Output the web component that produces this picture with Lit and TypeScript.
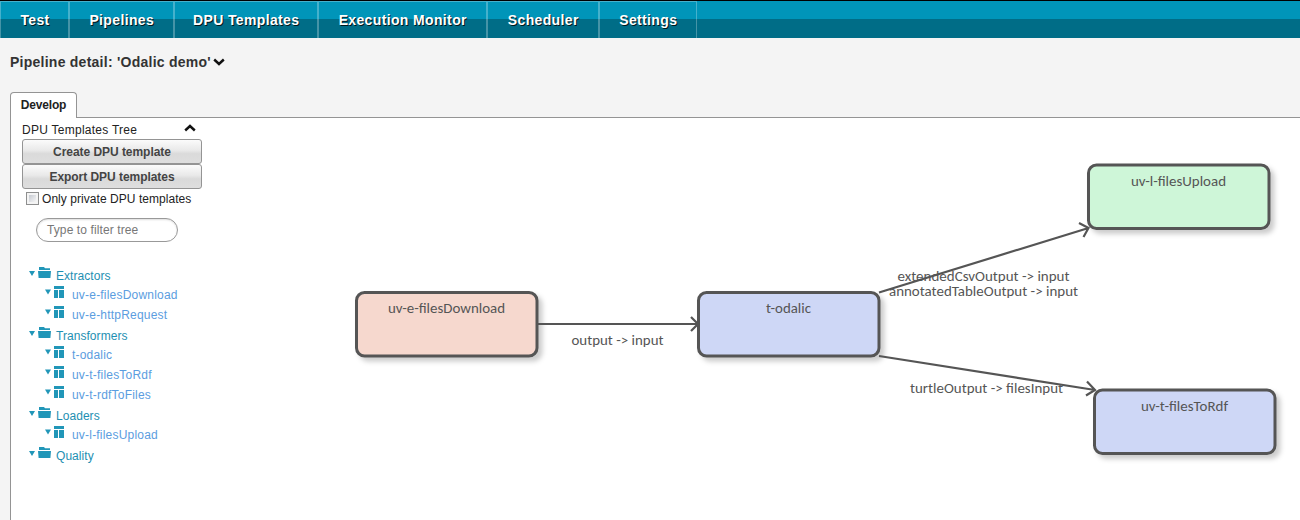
import { LitElement, html, svg, css } from "lit";
import { customElement } from "lit/decorators.js";

const menu = [
  { label: "Test", width: 69 },
  { label: "Pipelines", width: 105 },
  { label: "DPU Templates", width: 144 },
  { label: "Execution Monitor", width: 169 },
  { label: "Scheduler", width: 112 },
  { label: "Settings", width: 98 },
];

const tree = [
  { label: "Extractors", children: ["uv-e-filesDownload", "uv-e-httpRequest"] },
  { label: "Transformers", children: ["t-odalic", "uv-t-filesToRdf", "uv-t-rdfToFiles"] },
  { label: "Loaders", children: ["uv-l-filesUpload"] },
  { label: "Quality", children: [] as string[] },
];

// Diagram coordinates are relative to the canvas origin (211, 118).
const nodes = [
  { label: "uv-e-filesDownload", x: 145.5, y: 174.5, fill: "#f6d8ce", tx: 177, tw: 117 },
  { label: "t-odalic", x: 487.5, y: 174.5, fill: "#ced7f6", tx: 555, tw: 45 },
  { label: "uv-l-filesUpload", x: 877.5, y: 47, fill: "#cef6d8", tx: 920, tw: 95 },
  { label: "uv-t-filesToRdf", x: 883.5, y: 272, fill: "#ced7f6", tx: 930, tw: 87 },
];

const labels = [
  { text: "output -> input", x: 360.5, y: 227, w: 92 },
  { text: "extendedCsvOutput -> input", x: 686.5, y: 163, w: 172 },
  { text: "annotatedTableOutput -> input", x: 678, y: 178, w: 189 },
  { text: "turtleOutput -> filesInput", x: 699, y: 275, w: 153 },
];

@customElement("pipeline-canvas")
class PipelineCanvas extends LitElement {
  static styles = css`
    :host { display: block; flex: 1; min-width: 0; }
    svg { display: block; }
    text { font: 14px Carlito, Lato, "Open Sans", sans-serif; fill: #555; }
    .line { stroke: #555; stroke-width: 2.2; fill: none; }
    .box { stroke: #555; stroke-width: 3; }
  `;
  render() {
    return html`<svg width="1089" height="402" viewBox="0 0 1089 402">
      <defs>
        <filter id="shadow" x="-10%" y="-20%" width="125%" height="150%">
          <feDropShadow dx="4" dy="4" stdDeviation="2.5" flood-color="#000" flood-opacity="0.2" />
        </filter>
      </defs>
      ${nodes.map((n) => svg`
        <rect class="box" x=${n.x} y=${n.y} width="180.5" height="63.5" rx="8" fill=${n.fill} filter="url(#shadow)" />
        <text x=${n.tx} y=${n.y + 20.5} textLength=${n.tw} lengthAdjust="spacingAndGlyphs">${n.label}</text>`)}
      <path class="line" d="M327 206H487M480 199l7 7-7 7" />
      <path class="line" d="M668 174.5L877.5 110M868 105l9.5 5-5 9" />
      <path class="line" d="M668 238L884 272M876 263.500l8 8.500-9 5.500" />
      ${labels.map((l) => svg`<text x=${l.x} y=${l.y} textLength=${l.w} lengthAdjust="spacingAndGlyphs">${l.text}</text>`)}
    </svg>`;
  }
}

@customElement("app-root")
class AppRoot extends LitElement {
  static styles = css`
    :host {
      display: flex; flex-direction: column; box-sizing: border-box;
      width: 1300px; height: 520px; overflow: hidden; background: #f4f4f4;
      font: 12px "Liberation Sans", Arial, sans-serif; color: #222;
    }
    * { box-sizing: border-box; }
    nav {
      display: flex; height: 38px; border-top: 1px solid #000; flex: none;
      background: linear-gradient(#0095b9 0, #0095b9 18px, #006d87 18px);
    }
    .item {
      border: 1px solid rgba(255, 255, 255, 0.27); border-bottom: 0; text-align: center;
      font-weight: bold; font-size: 14px; line-height: 37px; letter-spacing: 0.36px; padding-left: 1px;
      color: #fff; text-shadow: 1px 1px 0 rgba(0, 0, 0, 0.8); white-space: nowrap;
    }
    .item + .item { padding-left: 0.5px; }
    h1 {
      display: flex; align-items: center; gap: 2px; margin: 0; height: 54px; flex: none;
      padding: 0 0 6px 10px; font-size: 14px; letter-spacing: 0.25px; color: #333;
    }
    .tabs { display: flex; height: 26px; flex: none; margin-left: 10px; }
    .tab {
      width: 67px; height: 26px; background: #fff; border: 1px solid #949494;
      border-bottom: 0; border-radius: 4px 4px 0 0; text-align: center;
      font-weight: bold; line-height: 24px; letter-spacing: -0.15px; color: #222;
    }
    .rule { flex: 1; border-bottom: 1px solid #949494; }
    .panel {
      display: flex; flex: 1; min-height: 0; margin-left: 10px;
      border-left: 1px solid #949494; background: #fff;
    }
    aside { width: 200px; flex: none; padding: 3px 9px 0 11px; }
    .head { display: flex; justify-content: space-between; padding-right: 6px; height: 18px; line-height: 19px; letter-spacing: .26px; }
    .head svg { margin-top: 2px; }
    button {
      display: block; width: 180px; height: 25px; padding: 0; border: 1px solid #949494;
      border-radius: 3px; background: linear-gradient(#fbfbfb 0, #e9e9e9 45%, #dadada 60%, #dedede 100%);
      font: bold 12px/24px "Liberation Sans", Arial, sans-serif; letter-spacing: -.05px; color: #444;
    }
    .check { display: flex; align-items: center; gap: 3px; height: 19px; padding-left: 4px; white-space: nowrap; letter-spacing: .05px; }
    .box { width: 13px; height: 13px; border: 1px solid #8e8f8f; background: linear-gradient(135deg, #c6cad2, #f6f6f6) content-box, #f4f4f4; padding: 2px; }
    .filter {
      display: flex; align-items: center; width: 142px; height: 24px; margin: 10px 0 0 14px; padding: 0 10px;
      border: 1px solid #999; border-radius: 12px; color: #777; box-shadow: inset 0 1px 2px #ddd; letter-spacing: .1px;
    }
    .tree { margin-top: 22px; }
    .row { display: flex; height: 20px; padding-left: 7px; color: #1e8fb2; letter-spacing: .05px; }
    .leaf { padding-left: 23px; color: #5b9de0; letter-spacing: .2px; }
    .row svg { flex: none; fill: #2196b8; }
    .row span { line-height: 25px; }
    .leaf span { line-height: 23px; }
  `;

  row(label: string, leaf: boolean) {
    return leaf
      ? html`<div class="row leaf">
          <svg width="27" height="20" shape-rendering="crispEdges">
            <path shape-rendering="auto" d="M0 5.500h6l-3 5z" />
            <path d="M9 2h10v3H9zM9 6h4v8H9zM14 6h5v8h-5z" />
          </svg><span>${label}</span></div>`
      : html`<div class="row">
          <svg width="27" height="20">
            <path d="M0 7h6l-3 5z" />
            <path d="M10 3h5l1 1.200h5V6H10zM9 7h13l-.600 7H9.600z" />
          </svg><span>${label}</span></div>`;
  }

  render() {
    return html`
      <nav>${menu.map((m) => html`<div class="item" style="width:${m.width}px">${m.label}</div>`)}</nav>
      <h1>Pipeline detail: 'Odalic demo'
        <svg width="12" height="8"><path d="M1.200 1.500L6 6l4.800-4.500" fill="none" stroke="#111" stroke-width="2.400" /></svg>
      </h1>
      <div class="tabs"><div class="tab">Develop</div><div class="rule"></div></div>
      <div class="panel">
        <aside>
          <div class="head"><span>DPU Templates Tree</span>
            <svg width="12" height="9"><path d="M1.200 7.500L6 3l4.800 4.500" fill="none" stroke="#111" stroke-width="2.400" /></svg>
          </div>
          <button>Create DPU template</button>
          <button>Export DPU templates</button>
          <div class="check"><div class="box"></div>Only private DPU templates</div>
          <div class="filter">Type to filter tree</div>
          <div class="tree">${tree.map((g) => [this.row(g.label, false), g.children.map((c) => this.row(c, true))])}</div>
        </aside>
        <pipeline-canvas></pipeline-canvas>
      </div>`;
  }
}
